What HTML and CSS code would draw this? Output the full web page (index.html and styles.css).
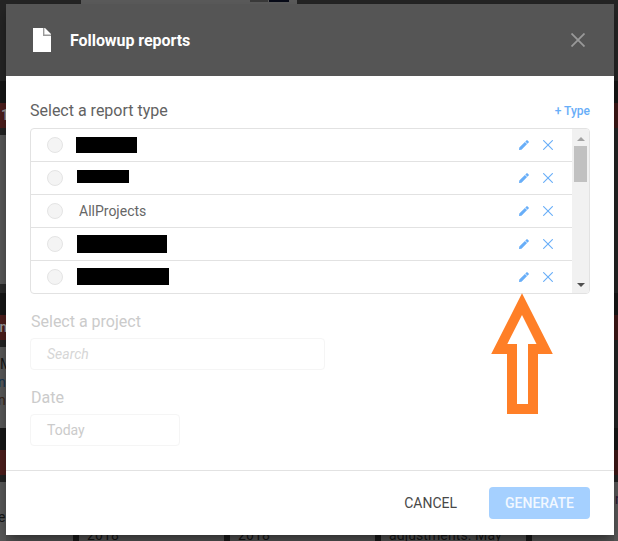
FILE: index.html
```html
<!DOCTYPE html>
<html lang="en">
<head>
<meta charset="utf-8">
<title>Followup reports</title>
<link rel="stylesheet" href="styles.css">
</head>
<body>
<div class="backdrop">
  <div class="lane">
    <div class="band head"></div><div class="band gap"></div><div class="band red"><b class="one">1</b></div><div class="band shade"></div>
    <div class="band card tall"></div><div class="band rest"></div><div class="band gap"></div><div class="band red"><b>in</b></div><div class="band shade"></div>
    <div class="band card mid"><p>M</p><p class="blue">n</p><p class="brown">n</p></div><div class="band gap"></div><div class="band red"></div><div class="band shade"></div>
    <div class="band card end"><p>e</p></div>
  </div>
  <div class="center">
    <div class="top-strip"><i class="sheet"><i class="chip"></i><i class="chip navy"></i></i></div>
    <div class="bottom-strip">
      <div class="tile first"></div><div class="tile">2018</div><div class="tile">2018</div><div class="tile">adjustments. May</div><div class="tile last"></div>
    </div>
  </div>
  <div class="lane right">
    <div class="band head"></div><div class="band gap"></div><div class="band red"></div><div class="band long"></div>
    <div class="band gap"></div><div class="band red"></div><div class="band medium"></div>
    <div class="band gap"></div><div class="band red"></div><div class="band shade"></div>
    <div class="band card end"><p class="purple">n</p></div>
  </div>
</div>

<svg class="defs" width="0" height="0">
  <symbol id="pencil" viewBox="0 0 10 10"><path d="M0 10 .3 7.5 5.9 1.9 8.1 4.1 2.5 9.7zM6.3 1.5 7.6.3Q8 0 8.4.3L9.7 1.6Q10 2 9.7 2.4L8.5 3.7z"/></symbol>
  <symbol id="cross" viewBox="0 0 10 10"><path d="M.2.2 9.8 9.8M9.8.2.2 9.8"/></symbol>
</svg>

<section class="modal">
  <header class="modal-head">
    <svg class="doc" width="18" height="24" viewBox="0 0 18 24"><path class="page" d="M0 0H12L18 6V24H0z"/><path class="fold" d="M10 0h1.4V6.6H18V8H10z"/></svg>
    <h1>Followup reports</h1>
    <svg class="close" width="14" height="14" viewBox="0 0 14 14"><path d="M.5.5 13.5 13.5M13.5.5.5 13.5"/></svg>
  </header>
  <div class="modal-body">
    <div class="label-row"><h2>Select a report type</h2><a class="add">+ Type</a></div>
    <div class="list">
      <ul class="rows">
        <li><i class="radio"></i><i class="mask m1"></i><svg class="pencil"><use href="#pencil"/></svg><svg class="cross"><use href="#cross"/></svg></li>
        <li><i class="radio"></i><i class="mask m2"></i><svg class="pencil"><use href="#pencil"/></svg><svg class="cross"><use href="#cross"/></svg></li>
        <li><i class="radio"></i><span class="name">AllProjects</span><svg class="pencil"><use href="#pencil"/></svg><svg class="cross"><use href="#cross"/></svg></li>
        <li><i class="radio"></i><i class="mask m4"></i><svg class="pencil"><use href="#pencil"/></svg><svg class="cross"><use href="#cross"/></svg></li>
        <li><i class="radio"></i><i class="mask m5"></i><svg class="pencil"><use href="#pencil"/></svg><svg class="cross"><use href="#cross"/></svg></li>
      </ul>
      <div class="scrollbar"><i class="up"></i><i class="thumb"></i><i class="down"></i></div>
    </div>
    <div class="disabled">
      <h2>Select a project</h2>
      <div class="field search">Search</div>
      <h2 class="date-label">Date</h2>
      <div class="field date">Today</div>
    </div>
  </div>
  <footer class="modal-foot">
    <span class="cancel">CANCEL</span>
    <span class="generate">GENERATE</span>
  </footer>
</section>

<svg class="arrow" width="64" height="122" viewBox="490 293 64 122"><path class="outer" d="M522 293.3 552.8 354H538V414H507V354H491.2z"/><path class="inner" d="M522 315 536.5 344H528V404H517V344H507.3z"/></svg>
</body>
</html>
```

FILE: styles.css
```css
* { box-sizing: border-box; margin: 0; padding: 0; }
body { width: 618px; height: 541px; overflow: hidden; position: relative; background: #242424; font-family: Roboto, "Liberation Sans", sans-serif; }
i { display: block; font-style: normal; }
.defs { position: absolute; }

.backdrop { display: flex; height: 541px; }
.lane { width: 6px; overflow: hidden; }
.lane.right { width: 4px; }
.band { overflow: hidden; }
.head { height: 81px; background: #242424; }
.gap { height: 22px; background: #161616; }
.red { height: 25px; background: #4c1e1c; color: #999; font-size: 14px; line-height: 25px; }
.right .red { background: #3d1716; }
.red b { display: block; margin-left: -4px; font-weight: 500; }
.red b.one { margin-left: 1px; }
.shade { height: 7px; background: #222; }
.card { background: #575757; color: #151515; font-size: 14px; line-height: 18px; }
.tall { height: 149px; }
.rest { height: 9px; background: #2a2a2a; }
.mid { height: 81px; padding-top: 8px; }
.mid p { margin-left: -2px; }
.mid p:first-child { margin-left: 0; }
.mid .blue { color: #16344f; }
.mid .brown { color: #3a2418; }
.end { height: 59px; padding-top: 26px; }
.end p { margin-left: -2px; }
.right .end { padding-top: 8px; }
.right .end p { margin-left: 1px; color: #281633; }
.long { height: 165px; background: #222323; }
.medium { height: 88px; background: #222323; }

.center { width: 608px; display: flex; flex-direction: column; justify-content: space-between; }
.top-strip { height: 4px; padding-left: 75px; background: #242424; }
.sheet { width: 216px; height: 4px; padding-right: 8px; display: flex; justify-content: flex-end; gap: 1px; background: #5b5b5b; }
.chip { width: 18px; height: 2px; background: #3a3a3a; }
.chip.navy { width: 20px; background: #080b18; }
.bottom-strip { height: 6px; display: flex; gap: 6px; background: #181818; }
.tile { flex-shrink: 0; width: 145px; height: 6px; overflow: hidden; padding-left: 8px; background: #505050; color: #151515; font-size: 14px; line-height: 12px; letter-spacing: .1px; display: flex; align-items: flex-end; }
.tile.first { width: 67px; }
.tile.last { width: 83px; }

.modal { position: absolute; left: 6px; top: 4px; width: 608px; height: 531px; display: flex; flex-direction: column; background: #fff; box-shadow: 0 6px 12px -3px rgba(0,0,0,.5); }
.modal-head { height: 72px; padding: 0 29px 0 27px; display: flex; align-items: center; background: #555; }
.page { fill: #fff; }
.fold { fill: #999; }
.modal-head h1 { flex: 1; margin: 2px 0 0 19px; color: #fff; font-size: 16px; line-height: 20px; font-weight: 700; letter-spacing: -.06px; }
.close { fill: none; stroke: #999; stroke-width: 1.8; }

.modal-body { flex: 1; padding: 24px 24px 0; }
.label-row { display: flex; justify-content: space-between; height: 28px; }
h2 { color: #626262; font-size: 16px; line-height: 21px; font-weight: 400; }
.add { color: #68aef8; font-size: 12px; line-height: 22px; font-weight: 500; }
.list { height: 166px; display: flex; overflow: hidden; border: 1px solid #e2e2e2; border-radius: 4px; }
.rows { flex: 1; list-style: none; }
.rows li { height: 33px; padding: 0 19px 0 16px; display: flex; align-items: center; border-bottom: 1px solid #e2e2e2; }
.rows li:last-child { height: 32px; border-bottom: 0; }
.radio { width: 16px; height: 16px; border: 1px solid #e4e4e4; border-radius: 50%; background: #f4f4f4; }
.name { margin-left: 16px; color: #666; font-size: 14px; line-height: 18px; }
.mask { margin-left: 14px; background: #000; }
.m1 { width: 61px; height: 16px; margin-left: 13px; }
.m2 { width: 52px; height: 13px; margin-bottom: 3px; }
.m4 { width: 90px; height: 18px; }
.m5 { width: 92px; height: 17px; margin-bottom: 1px; }
.pencil { width: 10px; height: 10px; margin-left: auto; fill: #68aef8; }
.cross { width: 10px; height: 10px; margin-left: 14px; fill: none; stroke: #68aef8; stroke-width: 1.1; }
.scrollbar { width: 17px; padding: 8px 0 5px; display: flex; flex-direction: column; align-items: center; background: #f1f1f1; }
.up { border: 4px solid transparent; border-top: 0; border-bottom-color: #a3a3a3; margin-bottom: 5px; }
.thumb { width: 13px; height: 36px; background: #c1c1c1; }
.down { margin: auto 0 1px; border: 4px solid transparent; border-bottom: 0; border-top-color: #505050; }

.disabled { padding-top: 17px; }
.disabled h2 { color: #cbcbcb; padding-left: 1px; }
.field { height: 32px; padding-left: 16px; display: flex; align-items: center; border: 1px solid #f5f5f5; border-radius: 4px; color: #cbcbcb; font-size: 14px; }
.search { width: 295px; margin-top: 6px; font-style: italic; color: #d6d6d6; }
.date-label { margin-top: 17px; }
.date { width: 150px; margin-top: 6px; }

.modal-foot { height: 65px; padding: 0 24px; display: flex; align-items: center; justify-content: flex-end; border-top: 1px solid #e2e2e2; }
.cancel { color: #484848; font-size: 14px; margin-right: 32px; }
.generate { width: 101px; height: 32px; border-radius: 4px; background: #a5d0ff; color: #f2f8ff; font-size: 14px; line-height: 32px; font-weight: 500; text-align: center; }

.arrow { position: absolute; left: 490px; top: 293px; }
.outer { fill: #ff7f27; }
.inner { fill: #fff; }
```
